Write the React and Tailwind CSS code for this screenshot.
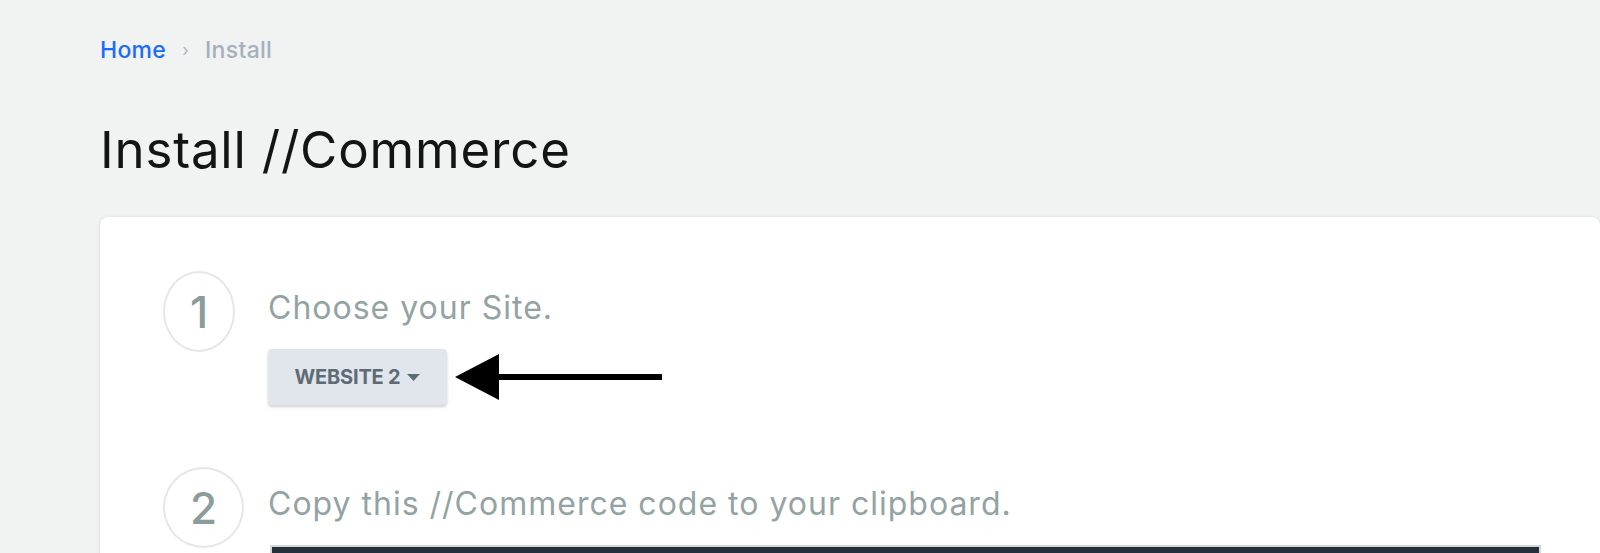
import React from "react";

function StepCircle({ n }) {
  return (
    <div className="w-[105px] shrink-0">
      <div className="inline-flex h-[81px] items-center justify-center rounded-[50%] border-2 border-[#e6e8e8] px-[25px] text-[44px] font-medium leading-none text-[#8c9c9c]">
        {n}
      </div>
    </div>
  );
}

export default function App() {
  return (
    <div
      className="min-h-screen overflow-hidden bg-[#f1f2f2] pl-[100px] pt-[37px]"
      style={{ fontFamily: "Inter, 'Noto Sans', sans-serif" }}
    >
      <nav className="flex items-center text-[23px] leading-[26px] tracking-[0.3px]">
        <span className="font-medium text-[#1a6cff]">Home</span>
        <span className="mx-[16px] text-[17px] text-[#a9b4bf]">›</span>
        <span className="font-medium text-[#a5b0bd]">Install</span>
      </nav>

      <h1 className="mt-[57px] text-[51px] leading-[60px] font-normal tracking-[0.8px] text-[#141414]">
        Install //Commerce
      </h1>

      <div className="mt-[37px] h-[400px] rounded-l-lg rounded-tr-lg bg-white pl-[63px] pt-[54px] shadow-[0_0_3px_rgba(0,0,0,0.12)]">
        <div className="flex">
          <StepCircle n="1" />
          <div className="flex flex-col">
            <div className="pt-[17px] text-[32px] leading-[40px] tracking-[1px] text-[#93a3a3]">
              Choose your Site.
            </div>
            <div className="mt-[21px] flex items-center">
              <button className="flex h-[56px] w-[179px] items-center justify-center gap-[7px] rounded-[4px] bg-[#e1e6ec] text-[20px] font-bold tracking-[-0.2px] text-[#5e6b75] shadow-[0_2px_3px_rgba(0,0,0,0.18)]">
                WEBSITE 2
                <svg width="13" height="7" viewBox="0 0 13 7">
                  <path d="M0 0 L13 0 L6.5 7 Z" fill="#5e6b75" />
                </svg>
              </button>
              <svg className="ml-[8px]" width="210" height="46" viewBox="0 0 210 46">
                <path d="M0 23 L44 0 L44 20 L207 20 L207 26 L44 26 L44 46 Z" fill="#000" />
              </svg>
            </div>
          </div>
        </div>

        <div className="mt-[62px] flex">
          <StepCircle n="2" />
          <div className="flex flex-1 flex-col pr-[59px]">
            <div className="pt-[17px] text-[32px] leading-[40px] tracking-[1px] text-[#93a3a3]">
              Copy this //Commerce code to your clipboard.
            </div>
            <div className="mt-[21px] ml-[2px] h-[60px] border-2 border-[#d6d8d8] bg-[#25313a]" />
          </div>
        </div>
      </div>
    </div>
  );
}
